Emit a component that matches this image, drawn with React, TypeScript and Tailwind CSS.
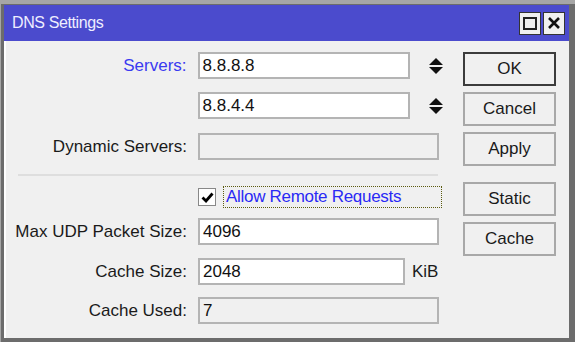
import React from "react";

const font = { fontFamily: '"Liberation Sans", Arial, sans-serif' };

function Field({ value, w = "w-[241px]", disabled = false }: { value?: string; w?: string; disabled?: boolean }) {
  return (
    <div
      className={`${w} h-[27px] border-2 border-[#b4b4b4] ${disabled ? "bg-[#f0f0f0]" : "bg-white"} flex items-center pl-[3px] text-[17px] text-[#111]`}
    >
      {value}
    </div>
  );
}

function Label({ text, blue = false }: { text: string; blue?: boolean }) {
  return (
    <div className={`w-[181px] text-right text-[17px] ${blue ? "text-[#3a3af0]" : "text-[#1a1a1a]"}`}>{text}</div>
  );
}

function Spinner() {
  return (
    <svg width="14" height="16" viewBox="0 0 14 16" className="ml-[8px]">
      <path d="M7 0 L14 7 L0 7 Z" fill="#111" />
      <path d="M0 9 L14 9 L7 16 Z" fill="#111" />
    </svg>
  );
}

function Btn({ text, def = false }: { text: string; def?: boolean }) {
  return (
    <div
      className={`w-[93px] h-[34px] flex items-center justify-center text-[17px] text-[#1a1a1a] bg-[#f0f0f0] ${def ? "border-2 border-[#3c3c3c]" : "border-2 border-[#a8a8a8]"}`}
    >
      {text}
    </div>
  );
}

export default function App() {
  return (
    <div className="w-[575px] h-[342px] bg-[#a6a6a6] pt-[4px] pl-[1px]" style={font}>
      <div className="w-[574px] h-[338px] border-l-[3px] border-r-[6px] border-b-[4px] border-t-[1px] border-[#6c6c6c] flex flex-col">
        {/* title bar */}
        <div className="h-[36px] bg-[#4b4bcd] flex items-center pl-[8px] pr-[4px]">
          <span className="text-[16px] tracking-[-0.4px] text-[#eeeeff] flex-1">DNS Settings</span>
          <div className="w-[22px] h-[23px] bg-[#f0f0f0] border border-[#333] flex items-center justify-center mr-[2px]">
            <div className="w-[14px] h-[13px] border-2 border-[#222]" />
          </div>
          <div className="w-[22px] h-[23px] bg-[#f0f0f0] border border-[#333] flex items-center justify-center">
            <svg width="12" height="12" viewBox="0 0 12 12">
              <path d="M1 1 L11 11 M11 1 L1 11" stroke="#111" strokeWidth="2.6" />
            </svg>
          </div>
        </div>
        {/* body */}
        <div className="flex-1 bg-[#f0f0f0] border-l-2 border-white flex pt-[11px]">
          <div className="w-[437px] flex flex-col">
            <div className="flex items-center gap-[11px]">
              <Label text="Servers:" blue />
              <Field value="8.8.8.8" w="w-[213px]" />
              <Spinner />
            </div>
            <div className="flex items-center gap-[11px] mt-[13px]">
              <div className="w-[181px]" />
              <Field value="8.8.4.4" w="w-[213px]" />
              <Spinner />
            </div>
            <div className="flex items-center gap-[11px] mt-[14px]">
              <Label text="Dynamic Servers:" />
              <Field disabled />
            </div>
            <div className="ml-[12px] mt-[14px] h-[2px] w-[420px] bg-[#dedede]" />
            <div className="flex items-center gap-[11px] mt-[10px]">
              <div className="w-[181px]" />
              <div className="w-[18px] h-[18px] border border-[#888] bg-white flex items-center justify-center">
                <svg width="13" height="11" viewBox="0 0 13 11">
                  <path d="M1.5 5.5 L5 9 L11.5 1.5" stroke="#000" strokeWidth="2.8" fill="none" />
                </svg>
              </div>
              <div className="ml-[-4px] w-[219px] h-[22px] border border-dotted border-[#5c5c10] bg-[#f0f0f0] flex items-center pl-[2px] text-[17px] tracking-[-0.3px] text-[#2a2af5]">
                Allow Remote Requests
              </div>
            </div>
            <div className="flex items-center gap-[11px] mt-[10px]">
              <Label text="Max UDP Packet Size:" />
              <Field value="4096" />
            </div>
            <div className="flex items-center gap-[11px] mt-[13px]">
              <Label text="Cache Size:" />
              <Field value="2048" w="w-[207px]" />
              <span className="text-[17px] text-[#1a1a1a] ml-[-4px]">KiB</span>
            </div>
            <div className="flex items-center gap-[11px] mt-[12px]">
              <Label text="Cache Used:" />
              <Field value="7" disabled />
            </div>
          </div>
          <div className="ml-[20px] flex flex-col gap-[6px]">
            <Btn text="OK" def />
            <Btn text="Cancel" />
            <Btn text="Apply" />
            <div className="h-[4px]" />
            <Btn text="Static" />
            <Btn text="Cache" />
          </div>
        </div>
      </div>
    </div>
  );
}
